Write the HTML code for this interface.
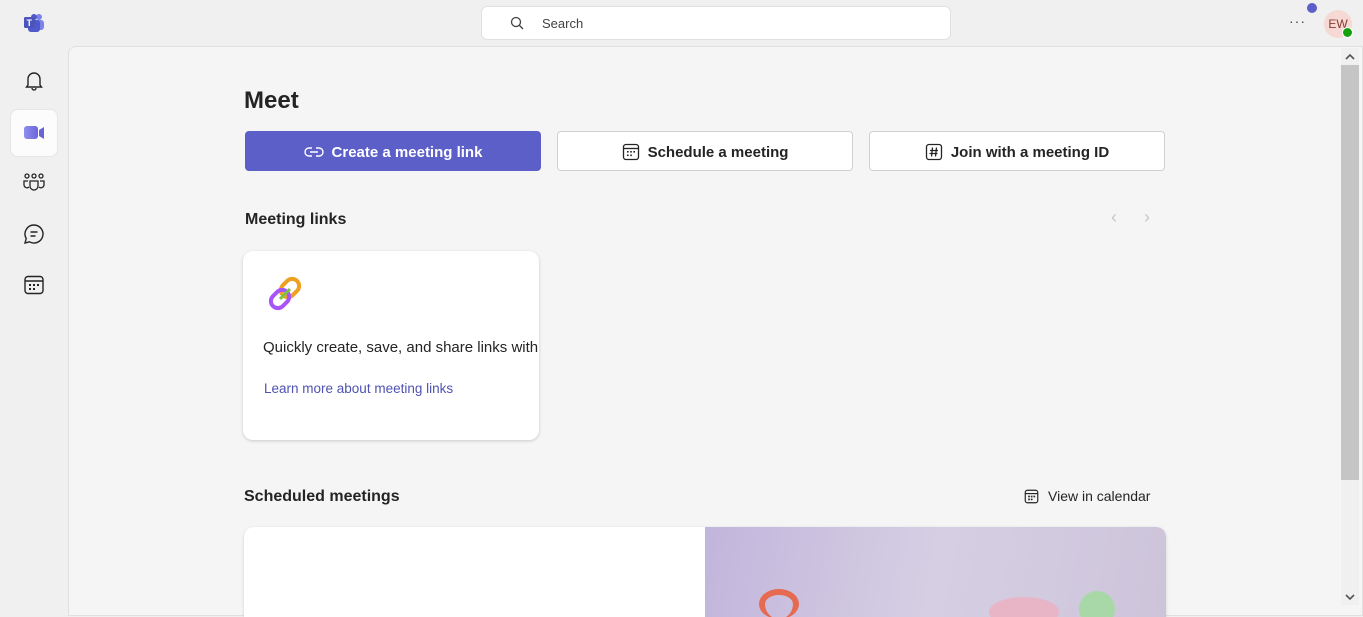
<!DOCTYPE html>
<html><head><style>
*{box-sizing:border-box;margin:0;padding:0}
body{width:1363px;height:605px;overflow:hidden;background:#f0f0f0;font-family:"Segoe UI","Liberation Sans",sans-serif;color:#242424;position:relative}
.abs{position:absolute}
.panel{left:68px;top:46px;width:1295px;height:570px;background:#f5f5f5;border:1px solid #e0e0e0;border-radius:8px 0 0 0}
.search{left:481px;top:6px;width:470px;height:34px;background:#fff;border:1px solid #e0e0e0;border-radius:6px;font-size:13px;color:#424242}
.btn{top:131px;height:40px;width:296px;border:1px solid #d1d1d1;border-radius:4px;background:#fff;font-size:15px;font-weight:600;display:flex;align-items:center;justify-content:center;gap:8px;padding-top:2px}
.h{font-size:16px;font-weight:700}
</style></head><body>
<svg class="abs" style="left:23px;top:13px" width="22" height="20" viewBox="0 0 22 20"><circle cx="16" cy="4" r="3" fill="#7b83eb"/><rect x="11" y="7" width="10" height="10" rx="3" fill="#7b83eb"/><circle cx="11" cy="4" r="3" fill="#5059c9"/><rect x="5" y="7" width="12" height="12" rx="3" fill="#5059c9"/><rect x="1" y="4" width="11" height="11" rx="1.5" fill="#4b53bc"/><text x="3.5" y="13" font-size="9" fill="#fff" font-weight="700" font-family="Liberation Sans">T</text></svg>
<svg class="abs" style="left:23px;top:70px" width="22" height="22" viewBox="0 0 22 22" fill="none" stroke="#242424" stroke-width="1.4"><path d="M5 15V9a6 6 0 0112 0v6l1.5 2h-15z"/><path d="M9 18a2 2 0 004 0"/></svg>
<div class="abs" style="left:10px;top:109px;width:48px;height:48px;background:#fcfcfc;border:1px solid #e6e6e6;border-radius:8px"></div>
<svg class="abs" style="left:23px;top:124px" width="22" height="18" viewBox="0 0 22 18"><defs><linearGradient id="g" x1="0" x2="1"><stop offset="0" stop-color="#8f8ff0"/><stop offset="1" stop-color="#6b64d8"/></linearGradient></defs><rect x="1" y="2" width="14" height="13" rx="3" fill="url(#g)"/><path d="M16 6l5-3v12l-5-3z" fill="#6b64d8"/></svg>
<svg class="abs" style="left:23px;top:173px" width="22" height="20" viewBox="0 0 22 20" fill="none" stroke="#242424" stroke-width="1.3"><circle cx="4" cy="3" r="2"/><circle cx="11" cy="3" r="2"/><circle cx="18" cy="3" r="2"/><path d="M7 8h8v5a4 4 0 01-8 0z"/><path d="M5 8H1v4a3 3 0 005 2M17 8h4v4a3 3 0 01-5 2"/></svg>
<svg class="abs" style="left:23px;top:223px" width="22" height="22" viewBox="0 0 22 22" fill="none" stroke="#242424" stroke-width="1.4"><path d="M11 2a9 9 0 11-4.5 16.8L2 20l1.2-4.5A9 9 0 0111 2z"/><path d="M7.5 9h7M7.5 13h5"/></svg>
<svg class="abs" style="left:23px;top:275px" width="22" height="20" viewBox="0 0 22 20" fill="none" stroke="#242424" stroke-width="1.4"><rect x="2" y="1.5" width="18" height="17" rx="3"/><path d="M2 6h18"/><g fill="#242424" stroke="none"><rect x="6" y="9" width="2" height="2"/><rect x="10" y="9" width="2" height="2"/><rect x="14" y="9" width="2" height="2"/><rect x="6" y="13" width="2" height="2"/><rect x="10" y="13" width="2" height="2"/></g></svg>
<div class="abs search"><svg class="abs" style="left:28px;top:9px" width="14" height="14" viewBox="0 0 14 14" fill="none" stroke="#424242" stroke-width="1.3"><circle cx="6" cy="6" r="4.5"/><path d="M9.5 9.5L13 13"/></svg><span class="abs" style="left:60px;top:9px">Search</span></div>
<div class="abs" style="left:1289px;top:13px;font-size:14px;color:#424242;letter-spacing:1px">···</div>
<div class="abs" style="left:1307px;top:3px;width:10px;height:10px;border-radius:50%;background:#5b5fc7"></div>
<div class="abs" style="left:1324px;top:10px;width:28px;height:28px;border-radius:50%;background:#f6d8d4;color:#8a3b30;font-size:12px;text-align:center;line-height:28px">EW</div>
<div class="abs" style="left:1342px;top:27px;width:11px;height:11px;border-radius:50%;background:#13a10e;border:1.5px solid #fff"></div>
<div class="abs panel"></div>
<div class="abs" style="left:1341px;top:48px;width:18px;height:557px;background:#f0f0f0"></div>
<div class="abs" style="left:1341px;top:65px;width:18px;height:415px;background:#c5c5c5"></div>
<svg class="abs" style="left:1345px;top:53px" width="10" height="8" viewBox="0 0 10 8"><path d="M1 6l4-4 4 4" fill="none" stroke="#555" stroke-width="1.6"/></svg>
<svg class="abs" style="left:1345px;top:593px" width="10" height="8" viewBox="0 0 10 8"><path d="M1 2l4 4 4-4" fill="none" stroke="#555" stroke-width="1.6"/></svg>
<div class="abs" style="left:244px;top:87px;font-size:24px;font-weight:600">Meet</div>
<div class="abs btn" style="left:245px;background:#5b5fc7;border-color:#5b5fc7;color:#fff"><svg width="20" height="12" viewBox="0 0 20 12" fill="none" stroke="#fff" stroke-width="1.4"><path d="M8 2H5a4 4 0 000 8h3M12 2h3a4 4 0 010 8h-3M6 6h8"/></svg>Create a meeting link</div>
<div class="abs btn" style="left:557px"><svg width="18" height="18" viewBox="0 0 18 18" fill="none" stroke="#242424" stroke-width="1.3"><rect x="1.5" y="1.5" width="15" height="15" rx="2.5"/><path d="M1.5 5.5h15"/><g fill="#242424" stroke="none"><rect x="5" y="8" width="1.6" height="1.6"/><rect x="8.2" y="8" width="1.6" height="1.6"/><rect x="11.4" y="8" width="1.6" height="1.6"/><rect x="5" y="11.5" width="1.6" height="1.6"/><rect x="8.2" y="11.5" width="1.6" height="1.6"/></g></svg>Schedule a meeting</div>
<div class="abs btn" style="left:869px"><svg width="18" height="18" viewBox="0 0 18 18" fill="none" stroke="#242424" stroke-width="1.3"><rect x="1.5" y="1.5" width="15" height="15" rx="2.5"/><path d="M7.5 4.5l-1 9M11.5 4.5l-1 9M5 7.5h8M4.5 10.5h8"/></svg>Join with a meeting ID</div>
<div class="abs h" style="left:245px;top:211px">Meeting links</div>
<div class="abs" style="left:1111px;top:207px;color:#c8c8c8;font-size:18px">‹</div>
<div class="abs" style="left:1144px;top:207px;color:#c8c8c8;font-size:18px">›</div>
<div class="abs" style="left:243px;top:251px;width:296px;height:189px;background:#fff;border-radius:10px;box-shadow:0 1px 3px rgba(0,0,0,.18);overflow:hidden">
<svg class="abs" style="left:24px;top:24px" width="38" height="38" viewBox="0 0 38 38"><rect x="16" y="3" width="14" height="20" rx="7" transform="rotate(45 23 13)" fill="none" stroke="#f0a020" stroke-width="4"/><rect x="6" y="14" width="14" height="20" rx="7" transform="rotate(45 13 24)" fill="none" stroke="#a855f7" stroke-width="4"/><path d="M13 24l10-10" stroke="#7cc242" stroke-width="3"/></svg>
<div class="abs" style="left:20px;top:88px;font-size:15px;white-space:nowrap">Quickly create, save, and share links with</div>
<div class="abs" style="left:21px;top:130px;font-size:13.5px;color:#4f52b2">Learn more about meeting links</div>
</div>
<div class="abs h" style="left:244px;top:488px">Scheduled meetings</div>
<svg class="abs" style="left:1024px;top:489px" width="15" height="15" viewBox="0 0 18 18" fill="none" stroke="#242424" stroke-width="1.4"><rect x="1.5" y="1.5" width="15" height="15" rx="2.5"/><path d="M1.5 5.5h15"/><g fill="#242424" stroke="none"><rect x="5" y="8" width="2" height="2"/><rect x="8.2" y="8" width="2" height="2"/><rect x="11.4" y="8" width="2" height="2"/><rect x="5" y="11.5" width="2" height="2"/><rect x="8.2" y="11.5" width="2" height="2"/></g></svg>
<div class="abs" style="left:1048px;top:488px;font-size:14px">View in calendar</div>
<div class="abs" style="left:244px;top:527px;width:922px;height:90px;background:#fff;border-radius:10px 10px 0 0;box-shadow:0 1px 3px rgba(0,0,0,.15);overflow:hidden">
<div class="abs" style="left:461px;top:0;width:461px;height:90px;background:linear-gradient(100deg,#c2b5dc,#d6cfe3 50%,#cdc4da)"></div>
<div class="abs" style="left:515px;top:62px;width:40px;height:30px;border-radius:50%;border:6px solid #e56a4f;border-bottom:none"></div>
<div class="abs" style="left:745px;top:70px;width:70px;height:30px;border-radius:50%;background:#e8b5c7"></div>
<div class="abs" style="left:835px;top:64px;width:36px;height:36px;border-radius:50%;background:#a8d8a8"></div>
</div>
</body></html>
